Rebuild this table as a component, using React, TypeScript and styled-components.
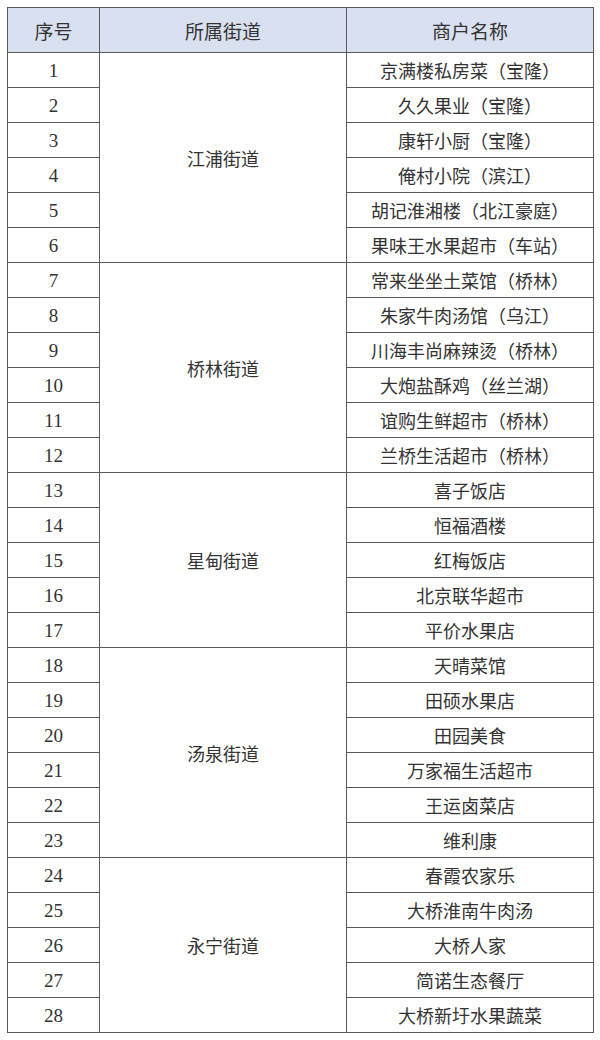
import React from "react";
import styled, { createGlobalStyle } from "styled-components";

const GlobalStyle = createGlobalStyle`
    html, body {
        margin: 0;
        padding: 0;
        background: #fff;
    }
    body {
        font-family: "Liberation Serif", "Noto Sans CJK SC", serif;
        color: #333;
    }
`;

const Page = styled.div`
    padding: 7px 7px 0 7px;
`;

const Table = styled.table`
    width: 586px;
    border-collapse: collapse;
    table-layout: fixed;
    border: 1.5px solid #5a5a5a;
`;

const HeadCell = styled.th`
    height: 44px;
    background-color: #d9e0f0;
    border: 1.5px solid #5a5a5a;
    font-weight: normal;
    font-size: 19px;
    font-family: "Noto Sans CJK SC", sans-serif;
    color: #333;
    padding: 0;
`;

interface ICell {
    serif?: boolean;
}

const Cell = styled.td<ICell>`
    height: 34px;
    padding: 0;
    border: 1.5px solid #5a5a5a;
    text-align: center;
    font-size: ${props => props.serif ? '19px' : '18px'};
    font-family: ${props => props.serif ? '"Liberation Serif", serif' : '"Noto Sans CJK SC", sans-serif'};
    color: #333;
    line-height: 1;
`;

const streets = [
    {
        name: "江浦街道",
        shops: ["京满楼私房菜（宝隆）", "久久果业（宝隆）", "康轩小厨（宝隆）", "俺村小院（滨江）", "胡记淮湘楼（北江豪庭）", "果味王水果超市（车站）"],
    },
    {
        name: "桥林街道",
        shops: ["常来坐坐土菜馆（桥林）", "朱家牛肉汤馆（乌江）", "川海丰尚麻辣烫（桥林）", "大炮盐酥鸡（丝兰湖）", "谊购生鲜超市（桥林）", "兰桥生活超市（桥林）"],
    },
    {
        name: "星甸街道",
        shops: ["喜子饭店", "恒福酒楼", "红梅饭店", "北京联华超市", "平价水果店"],
    },
    {
        name: "汤泉街道",
        shops: ["天晴菜馆", "田硕水果店", "田园美食", "万家福生活超市", "王运卤菜店", "维利康"],
    },
    {
        name: "永宁街道",
        shops: ["春霞农家乐", "大桥淮南牛肉汤", "大桥人家", "简诺生态餐厅", "大桥新圩水果蔬菜"],
    },
];

export default function App() {
    let n = 0;
    return (
        <Page>
            <GlobalStyle />
            <Table>
                <colgroup>
                    <col style={{ width: 92 }} />
                    <col style={{ width: 247 }} />
                    <col style={{ width: 247 }} />
                </colgroup>
                <thead>
                    <tr>
                        <HeadCell>序号</HeadCell>
                        <HeadCell>所属街道</HeadCell>
                        <HeadCell>商户名称</HeadCell>
                    </tr>
                </thead>
                <tbody>
                    {streets.map(street =>
                        street.shops.map((shop, i) => {
                            n += 1;
                            return (
                                <tr key={n}>
                                    <Cell serif>{n}</Cell>
                                    {i === 0 && <Cell rowSpan={street.shops.length}>{street.name}</Cell>}
                                    <Cell>{shop}</Cell>
                                </tr>
                            );
                        })
                    )}
                </tbody>
            </Table>
        </Page>
    );
}
